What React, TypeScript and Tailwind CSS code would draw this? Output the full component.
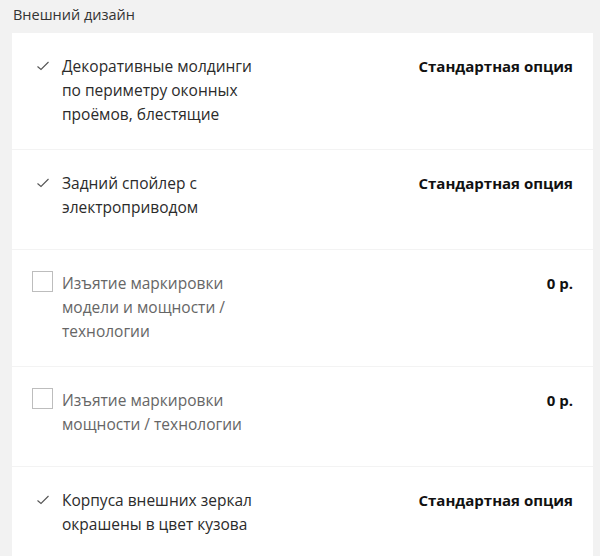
import React from "react";

type Item = { label: string; checked: boolean; price: string };

const items: Item[] = [
  { label: "Декоративные молдинги по периметру оконных проёмов, блестящие", checked: true, price: "Стандартная опция" },
  { label: "Задний спойлер с электроприводом", checked: true, price: "Стандартная опция" },
  { label: "Изъятие маркировки модели и мощности / технологии", checked: false, price: "0 р." },
  { label: "Изъятие маркировки мощности / технологии", checked: false, price: "0 р." },
  { label: "Корпуса внешних зеркал окрашены в цвет кузова", checked: true, price: "Стандартная опция" },
];

function Check() {
  return (
    <svg width="14" height="10" viewBox="0 0 14 10" className="mt-[7px]">
      <path d="M1.5 5.5 L5 8.5 L12.5 1" fill="none" stroke="#555" strokeWidth="1.1" />
    </svg>
  );
}

export default function App() {
  return (
    <div
      className="w-[600px] h-[556px] overflow-hidden bg-[#f2f2f2]"
      style={{ fontFamily: '"Open Sans", "Noto Sans", sans-serif' }}
    >
      <div className="pl-[13px] pt-[3px] h-[33px] text-[14.5px] leading-[24px] text-[#333]">Внешний дизайн</div>
      <div className="ml-[12px] mr-[7px] bg-white">
        {items.map((it, i) => (
          <div
            key={i}
            className={`flex items-start min-h-[100px] pt-[21px] pb-[23px] pl-[20px] pr-[20px] ${
              i < items.length - 1 ? "border-b border-[#f3f3f3]" : ""
            }`}
          >
            <div className="w-[30px] shrink-0 flex">
              {it.checked ? (
                <div className="pl-[4px]"><Check /></div>
              ) : (
                <div className="w-[21px] h-[21px] border border-[#bdbdbd] bg-white" />
              )}
            </div>
            <div
              className={`w-[205px] text-[15.5px] leading-[24px] ${
                it.checked ? "text-[#2b2b2b]" : "text-[#666]"
              }`}
            >
              {it.label}
            </div>
            <div className="ml-auto text-[15px] leading-[24px] font-bold text-[#111]">{it.price}</div>
          </div>
        ))}
      </div>
    </div>
  );
}
